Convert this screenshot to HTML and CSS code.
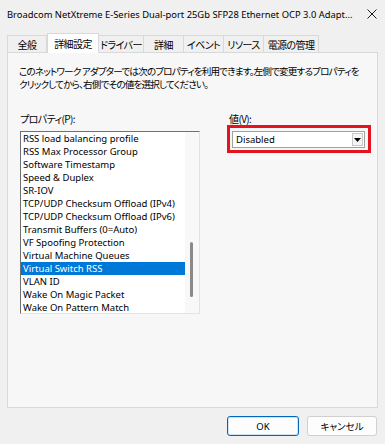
FILE: index.html
```html
<!DOCTYPE html>
<html lang="ja">
<head>
  <meta charset="UTF-8" />
  <title>Properties</title>
  <meta name="viewport" content="width=device-width, initial-scale=1.0" />
  <link rel="stylesheet" href="styles.css">
</head>
<body>
  <div class="dialog">
    <div class="titlebar">
      <span class="title">Broadcom NetXtreme E-Series Dual-port 25Gb SFP28 Ethernet OCP 3.0 Adapt...</span>
      <svg class="close" width="10" height="10" viewBox="0 0 10 10">
        <path d="M0.5 0.5 L9.5 9.5 M9.5 0.5 L0.5 9.5" stroke="#1a1a1a" stroke-width="1" fill="none" />
      </svg>
    </div>

    <div class="tabs">
      <div class="tab w40">全般</div>
      <div class="tab active w51">詳細設定</div>
      <div class="tab w45">ドライバー</div>
      <div class="tab w40">詳細</div>
      <div class="tab w40">イベント</div>
      <div class="tab w40">リソース</div>
      <div class="tab w55">電源の管理</div>
    </div>

    <div class="panel">
      <p class="desc">このネットワーク アダプターでは次のプロパティを利用できます。左側で変更するプロパティを<br>クリックしてから、右側でその値を選択してください。</p>

      <div class="fields">
        <div class="prop-col">
          <label class="jp-label">プロパティ(P):</label>
          <div class="listbox">
            <ul class="items">
              <li>RSS load balancing profile</li>
              <li>RSS Max Processor Group</li>
              <li>Software Timestamp</li>
              <li>Speed &amp; Duplex</li>
              <li>SR-IOV</li>
              <li>TCP/UDP Checksum Offload (IPv4)</li>
              <li>TCP/UDP Checksum Offload (IPv6)</li>
              <li>Transmit Buffers (0=Auto)</li>
              <li>VF Spoofing Protection</li>
              <li>Virtual Machine Queues</li>
              <li class="selected">Virtual Switch RSS</li>
              <li>VLAN ID</li>
              <li>Wake On Magic Packet</li>
              <li>Wake On Pattern Match</li>
            </ul>
            <div class="scrollbar"><div class="thumb"></div></div>
          </div>
        </div>

        <div class="value-col">
          <label class="jp-label">値(V):</label>
          <div class="highlight">
            <div class="combo">
              <span class="combo-text">Disabled</span>
              <span class="drop">
                <svg width="7" height="4" viewBox="0 0 7 4"><path d="M0 0 H7 L3.5 4 Z" fill="#000" /></svg>
              </span>
            </div>
          </div>
        </div>
      </div>
    </div>

    <div class="buttons">
      <button class="btn default">OK</button>
      <button class="btn cancel">キャンセル</button>
    </div>
  </div>
</body>
</html>
```

FILE: styles.css
```css
:root {
  --bg: #f0f0f0;
  --panel: #f7f7f7;
  --line: #d9d9d9;
  --select: #0078d7;
  --red: #e3141f;
}

body {
  margin: 0;
  background-color: var(--bg);
  font-family: "Noto Sans", "Noto Sans CJK JP", sans-serif;
  color: #000;
}

.dialog {
  width: 385px;
  height: 444px;
  display: flex;
  flex-direction: column;
}

.titlebar {
  height: 28px;
  padding: 0 8px 0 7px;
  display: flex;
  align-items: center;
  justify-content: space-between;
}

.title {
  font-size: 9.4px;
  white-space: nowrap;
}

.tabs {
  margin-top: 5px;
  padding-left: 7px;
  display: flex;
  align-items: flex-end;
  height: 19px;
  position: relative;
  z-index: 1;
}

.tab {
  height: 17px;
  box-sizing: border-box;
  display: flex;
  align-items: center;
  justify-content: center;
  font-family: "Noto Sans CJK JP", sans-serif;
  font-feature-settings: "palt";
  font-size: 10px;
  letter-spacing: -0.6px;
  border: 1px solid var(--line);
  border-bottom: none;
  border-left: none;
}

.tab:first-child {
  border-left: 1px solid var(--line);
}

.tab.active {
  height: 20px;
  margin-bottom: -1px;
  background: #fff;
  border-left: 1px solid var(--line);
}

.w40 { width: 40px; }
.w45 { width: 45px; }
.w51 { width: 52px; }
.w55 { width: 55px; }

.panel {
  margin: 0 7px 0 7px;
  height: 356px;
  box-sizing: border-box;
  background: var(--panel);
  border: 1px solid var(--line);
  padding: 12px 4px 0 11px;
}

.desc {
  margin: 0;
  font-family: "Noto Sans CJK JP", sans-serif;
  font-feature-settings: "palt";
  font-size: 9.6px;
  line-height: 13px;
  letter-spacing: -0.85px;
  white-space: nowrap;
}

.fields {
  margin-top: 21px;
  padding-left: 1px;
  display: flex;
  gap: 29px;
}

.jp-label {
  display: block;
  font-family: "Noto Sans CJK JP", sans-serif;
  font-feature-settings: "palt";
  font-size: 10px;
  line-height: 13px;
  letter-spacing: -0.6px;
}

.prop-col {
  flex: none;
  width: 180px;
}

.listbox {
  margin-top: 6px;
  height: 183px;
  box-sizing: border-box;
  background: #fff;
  border: 1px solid #e3e3e3;
  border-top-color: #707070;
  border-left-color: #707070;
  display: flex;
}

.items {
  list-style: none;
  margin: 0;
  padding: 0;
  flex: 1;
}

.items li {
  height: 13px;
  line-height: 13px;
  padding-left: 2px;
  font-size: 9.5px;
  white-space: nowrap;
  overflow: hidden;
}

.items li.selected {
  background: var(--select);
  color: #fff;
}

.scrollbar {
  width: 14px;
  background: #f8f8f8;
  position: relative;
}

.thumb {
  position: absolute;
  left: 5px;
  top: 110px;
  width: 3px;
  height: 55px;
  border-radius: 2px;
  background: #8a8a8a;
}

.value-col {
  flex: 1;
  min-width: 0;
}

.highlight {
  width: 144px;
  height: 28px;
  box-sizing: border-box;
  margin-left: -2px;
  border: 3px solid var(--red);
  padding: 3px 3px 2px 2px;
}

.combo {
  height: 17px;
  box-sizing: border-box;
  background: #fff;
  border: 1px solid #a0a0a0;
  display: flex;
  align-items: center;
  justify-content: space-between;
  padding: 0 1px 0 3px;
}

.combo-text {
  font-size: 9.5px;
}

.drop {
  width: 11px;
  height: 13px;
  box-sizing: border-box;
  border: 1px solid #c8c8c8;
  background: #f4f4f4;
  display: flex;
  align-items: center;
  justify-content: center;
}

.buttons {
  margin-top: 8px;
  padding-right: 8px;
  display: flex;
  justify-content: flex-end;
  gap: 8px;
}

.btn {
  height: 20px;
  padding: 0;
  background: #fdfdfd;
  border: 1px solid #d0d0d0;
  border-radius: 3px;
  font-family: "Noto Sans", "Noto Sans CJK JP", sans-serif;
  font-feature-settings: "palt";
  font-size: 9.5px;
  color: #000;
}

.btn.default {
  width: 72px;
  border-color: #0067c0;
  box-shadow: inset 0 0 0 1px #cfe3f5;
}

.btn.cancel {
  width: 70px;
}
```
